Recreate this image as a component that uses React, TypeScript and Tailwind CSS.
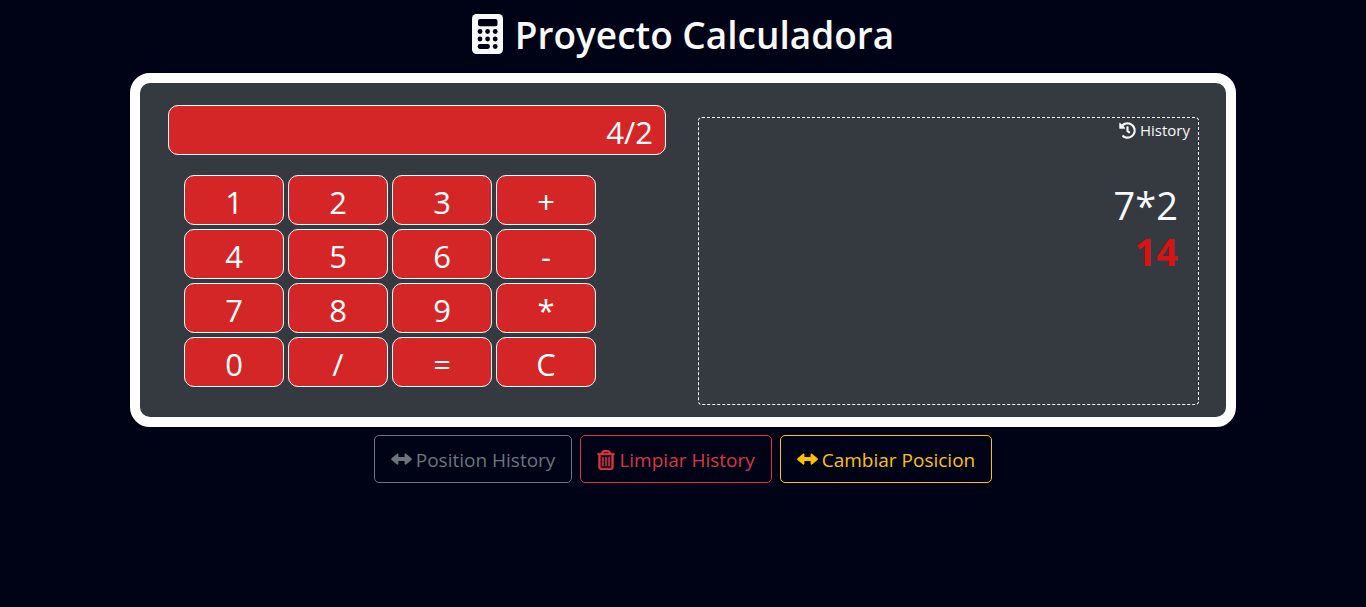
import { useState } from "react";
import { FaHistory } from "react-icons/fa";
import { FaRegTrashCan } from "react-icons/fa6";

const KEYS = ["1", "2", "3", "+", "4", "5", "6", "-", "7", "8", "9", "*", "0", "/", "=", "C"];

type Entry = { expression: string; result: string };

function calculate(expression: string): string {
  const tokens = expression.match(/\d+(?:\.\d+)?|[+\-*/]/g) ?? [];
  const terms: number[] = [];
  let operator = "+";
  for (const token of tokens) {
    if ("+-*/".includes(token)) {
      operator = token;
      continue;
    }
    const value = Number(token);
    if (operator === "+") terms.push(value);
    else if (operator === "-") terms.push(-value);
    else {
      const last = terms.pop() ?? 0;
      terms.push(operator === "*" ? last * value : last / value);
    }
  }
  return String(terms.reduce((sum, term) => sum + term, 0));
}

function CalculatorIcon() {
  return (
    <svg viewBox="0 0 31 40" className="h-10 w-[31px]" aria-hidden="true">
      <rect width="31" height="40" rx="4.5" fill="currentColor" />
      <g fill="#000316">
        <rect x="6" y="5" width="19.5" height="7.2" rx="2" />
        {[17.5, 25].map((y) =>
          [8, 15.6, 23.2].map((x) => <circle key={`${x}-${y}`} cx={x} cy={y} r="2.4" />),
        )}
        <rect x="5.6" y="30.1" width="12.4" height="4.8" rx="2.4" />
        <circle cx="23.2" cy="32.5" r="2.4" />
      </g>
    </svg>
  );
}

function LeftRightIcon() {
  return (
    <svg viewBox="0 0 21 20" className="h-5 w-[21px]" fill="currentColor" aria-hidden="true">
      <path d="M.5 8.200 6 3.700c.7-.6 1.400-.1 1.400.8V7h6.200V4.500c0-.9.7-1.400 1.400-.8l5.500 4.500c.5.500.5 1.200 0 1.700L15 14.400c-.7.600-1.400.1-1.400-.8V11.100H7.400v2.500c0 .9-.7 1.400-1.400.8L.5 9.900c-.5-.5-.5-1.200 0-1.700Z" />
    </svg>
  );
}

export default function App() {
  const [display, setDisplay] = useState("4/2");
  const [history, setHistory] = useState<Entry[]>([{ expression: "7*2", result: "14" }]);
  const [swapped, setSwapped] = useState(false);
  const [historyLeft, setHistoryLeft] = useState(false);

  const press = (key: string) => {
    if (key === "C") setDisplay("");
    else if (key === "=") {
      if (!display) return;
      const result = calculate(display);
      setHistory([...history, { expression: display, result }]);
      setDisplay(result);
    } else setDisplay(display + key);
  };

  const action = "flex h-12 items-center gap-1 rounded-[5px] border px-4 pt-0.5 text-[19px] leading-[30px]";

  return (
    <div className="min-h-screen bg-[#000316] px-3 pb-6 pt-1.5 font-['Open_Sans','Noto_Sans',sans-serif] text-[#f8f9fa]">
      <h1 className="flex h-14 items-center justify-center gap-3 text-[37px] font-semibold leading-[56px]">
        <CalculatorIcon />
        <span className="pt-0.5">Proyecto Calculadora</span>
      </h1>

      <main className={`mx-auto mt-[11px] flex w-full max-w-[1106px] rounded-[20px] border-[10px] border-white bg-[#343a40] px-3 ${swapped ? "flex-row-reverse" : "flex-row"}`}>
        <section className="w-1/2 pb-[30px] pl-4 pr-[17px] pt-[22px]">
          <input
            aria-label="Pantalla"
            readOnly
            value={display}
            className="block h-[50px] w-full rounded-[10px] border border-white bg-[#d42626] px-3 pt-1 text-right text-[31px] leading-[44px] text-white outline-none"
          />
          <div className="ml-4 mt-5 grid w-fit grid-cols-[repeat(4,100px)] gap-1">
            {KEYS.map((key) => (
              <button
                key={key}
                type="button"
                onClick={() => press(key)}
                className="h-[50px] rounded-[10px] border border-white bg-[#d42626] pt-1 text-[31px] leading-[44px] text-white"
              >
                {key}
              </button>
            ))}
          </div>
        </section>

        <section className="flex w-1/2 px-[15px] pb-3 pt-[34px]">
          <div className={`flex-1 rounded border border-dashed border-white ${historyLeft ? "text-left" : "text-right"}`}>
            <h2 className={`flex items-center gap-1 px-2 text-[15px] leading-6 ${historyLeft ? "justify-start" : "justify-end"}`}>
              <FaHistory className="size-[17px]" aria-hidden="true" />
              History
            </h2>
            <ul className="px-5 pt-10">
              {history.map((entry, index) => (
                <li key={index} className="text-[38px] leading-[46px]">
                  <div>{entry.expression}</div>
                  <div className="font-bold text-[#d91314]">{entry.result}</div>
                </li>
              ))}
            </ul>
          </div>
        </section>
      </main>

      <div className="mt-2 flex flex-wrap justify-center gap-2">
        <button type="button" onClick={() => setHistoryLeft(!historyLeft)} className={`${action} border-[#6c757d] text-[#6c757d]`}>
          <LeftRightIcon />
          Position History
        </button>
        <button type="button" onClick={() => setHistory([])} className={`${action} border-[#dc3545] text-[#dc3545]`}>
          <FaRegTrashCan className="h-5 w-[18px] [stroke-width:12px]" aria-hidden="true" />
          Limpiar History
        </button>
        <button type="button" onClick={() => setSwapped(!swapped)} className={`${action} border-[#ffc107] text-[#ffc107]`}>
          <LeftRightIcon />
          Cambiar Posicion
        </button>
      </div>
    </div>
  );
}
